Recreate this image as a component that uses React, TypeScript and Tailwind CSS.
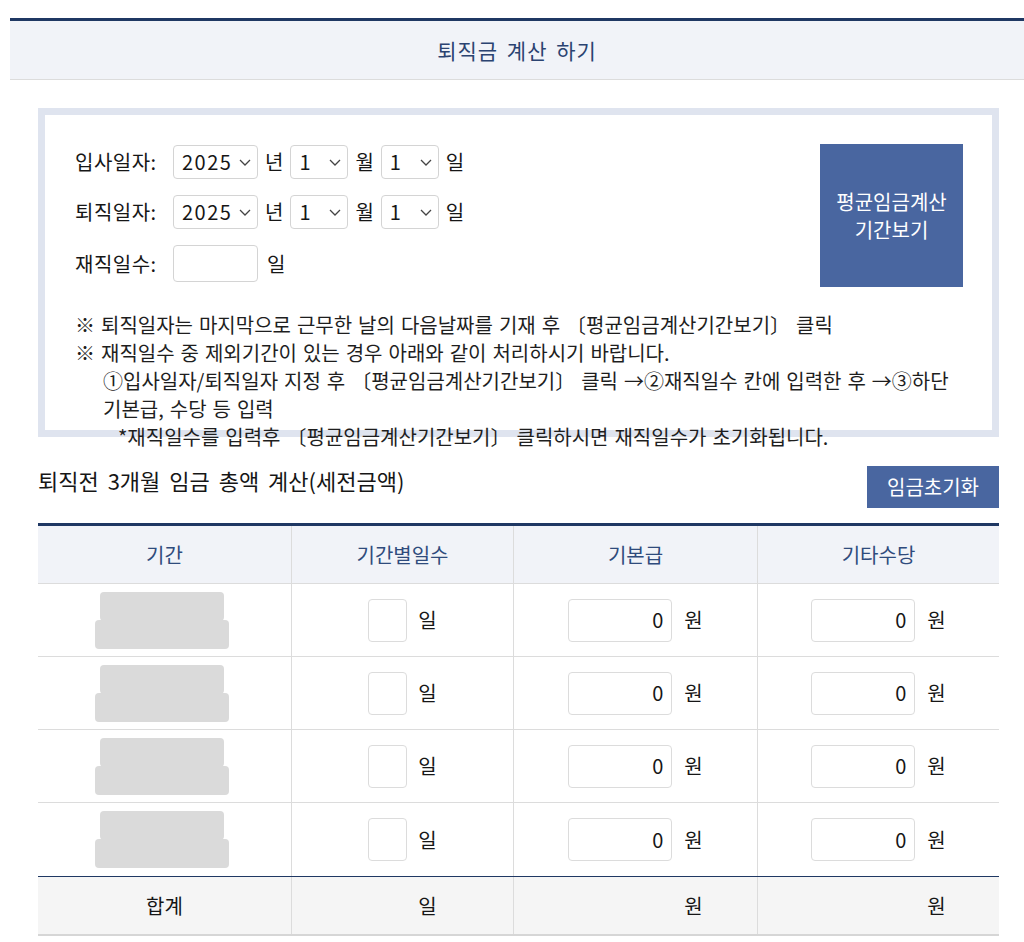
import React from "react";

const Chevron = () => (
  <svg width="12" height="7" viewBox="0 0 12 7" fill="none">
    <path d="M1 1l5 5 5-5" stroke="#444" strokeWidth="1.3" />
  </svg>
);

function Sel({ value, w }: { value: string; w: string }) {
  return (
    <div
      className={`flex items-center justify-between h-[34px] border border-[#d4d4d4] rounded-[4px] bg-white pl-[8px] pr-[6px] ${w}`}
    >
      <span className="tracking-[1.5px]">{value}</span>
      <Chevron />
    </div>
  );
}

function DateRow({ label }: { label: string }) {
  return (
    <div className="flex items-center gap-[7px] h-[34px]">
      <span className="w-[91px] tracking-[0.5px]">{label}</span>
      <Sel value="2025" w="w-[85px]" />
      <span>년</span>
      <Sel value="1" w="w-[58px]" />
      <span>월</span>
      <Sel value="1" w="w-[58px]" />
      <span>일</span>
    </div>
  );
}

function Placeholder() {
  return (
    <div className="flex flex-col items-center mr-[5px]">
      <div className="w-[124px] h-[29px] bg-[#dadada] rounded-[4px]" />
      <div className="w-[134px] h-[29px] bg-[#dadada] rounded-[4px] -mt-[1px]" />
    </div>
  );
}

function MoneyCell() {
  return (
    <div className="border-l border-[#dcdcdc] flex items-center justify-center gap-[12px]">
      <div className="w-[104px] h-[43px] border border-[#dcdcdc] rounded-[4px] flex items-center justify-end pr-[8px]">
        0
      </div>
      <span>원</span>
    </div>
  );
}

function DayCell() {
  return (
    <div className="border-l border-[#dcdcdc] flex items-center justify-center gap-[11px]">
      <div className="w-[39px] h-[43px] border border-[#dcdcdc] rounded-[4px]" />
      <span>일</span>
    </div>
  );
}

function DataRow({ last }: { last?: boolean }) {
  return (
    <div
      className={`grid grid-cols-[253px_222px_244px_242px] h-[73px] ${last ? "" : "border-b border-[#dcdcdc]"}`}
    >
      <div className="flex items-center justify-center">
        <Placeholder />
      </div>
      <DayCell />
      <MoneyCell />
      <MoneyCell />
    </div>
  );
}

export default function App() {
  return (
    <div className="min-h-[942px] bg-white text-[20px] text-[#161616] font-['Noto_Sans_CJK_KR','Noto_Sans',sans-serif] leading-[28px] pt-[18px] overflow-hidden">
      <div className="ml-[10px] h-[62px] border-t-[3px] border-b border-t-[#1f3863] border-b-[#dcdcdc] bg-[#f1f3f8] flex items-center justify-center text-[#2b4371] text-[21px] tracking-[1px] [word-spacing:3px]">
        퇴직금 계산 하기
      </div>

      <div className="ml-[38px] w-[961px]">
        <div className="mt-[28px] h-[329px] border-[7px] border-[#dfe4ef] pl-[30px] pr-[29px] pt-[29px]">
          <div className="flex justify-between">
            <div className="flex flex-col gap-[16px] pt-[1px]">
              <DateRow label="입사일자:" />
              <DateRow label="퇴직일자:" />
              <div className="flex items-center gap-[7px] h-[37px]">
                <span className="w-[91px] tracking-[0.5px]">재직일수:</span>
                <div className="w-[85px] h-[37px] border border-[#d4d4d4] rounded-[4px] bg-white" />
                <span className="ml-[2px]">일</span>
              </div>
            </div>
            <div className="w-[143px] h-[143px] bg-[#4966a0] text-white flex flex-col items-center justify-center leading-[28px]">
              <span>평균임금계산</span>
              <span>기간보기</span>
            </div>
          </div>
          <div className="mt-[24px] whitespace-nowrap text-[#1e1e1e] [word-spacing:1.5px]">
            <div>※ 퇴직일자는 마지막으로 근무한 날의 다음날짜를 기재 후 〔평균임금계산기간보기〕 클릭</div>
            <div>※ 재직일수 중 제외기간이 있는 경우 아래와 같이 처리하시기 바랍니다.</div>
            <div className="pl-[28px]">
              ①입사일자/퇴직일자 지정 후 〔평균임금계산기간보기〕 클릭 →②재직일수 칸에 입력한 후 →③하단
            </div>
            <div className="pl-[28px]">기본급, 수당 등 입력</div>
            <div className="pl-[43px]">
              *재직일수를 입력후 〔평균임금계산기간보기〕 클릭하시면 재직일수가 초기화됩니다.
            </div>
          </div>
        </div>

        <div className="mt-[29px] flex justify-between items-start">
          <div className="text-[22px] leading-[28px] [word-spacing:4px]">퇴직전 3개월 임금 총액 계산(세전금액)</div>
          <div className="w-[132px] h-[42px] bg-[#4966a0] text-white flex items-center justify-center">
            임금초기화
          </div>
        </div>

        <div className="mt-[15px] border-t-[3px] border-[#1f3863]">
          <div className="grid grid-cols-[253px_222px_244px_242px] h-[58px] bg-[#f1f3f8] border-b border-[#dcdcdc] text-[#2f4b7c]">
            <div className="flex items-center justify-center">기간</div>
            <div className="border-l border-[#dcdcdc] flex items-center justify-center">기간별일수</div>
            <div className="border-l border-[#dcdcdc] flex items-center justify-center">기본급</div>
            <div className="border-l border-[#dcdcdc] flex items-center justify-center">기타수당</div>
          </div>
          <DataRow />
          <DataRow />
          <DataRow />
          <DataRow last />
          <div className="grid grid-cols-[253px_222px_244px_242px] h-[60px] bg-[#f5f5f5] border-t border-t-[#1f3863] border-b-2 border-b-[#d6d6d6]">
            <div className="flex items-center justify-center">합계</div>
            <div className="border-l border-[#dcdcdc] flex items-center justify-center gap-[11px]">
              <div className="w-[39px]" />
              <span>일</span>
            </div>
            <div className="border-l border-[#dcdcdc] flex items-center justify-center gap-[12px]">
              <div className="w-[104px]" />
              <span>원</span>
            </div>
            <div className="border-l border-[#dcdcdc] flex items-center justify-center gap-[12px]">
              <div className="w-[104px]" />
              <span>원</span>
            </div>
          </div>
        </div>
      </div>
    </div>
  );
}
